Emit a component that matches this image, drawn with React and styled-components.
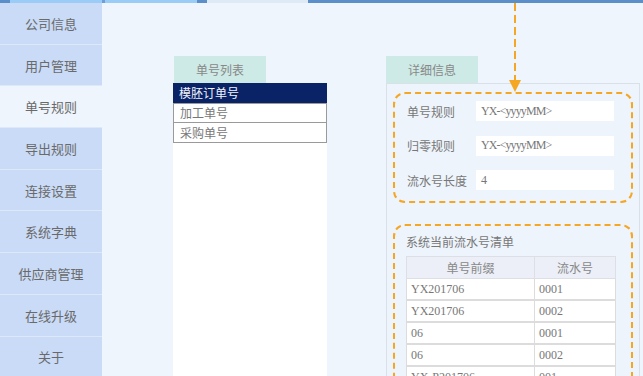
import React from "react";
import styled, { createGlobalStyle } from "styled-components";

const Global = createGlobalStyle`
  html, body { margin: 0; padding: 0; }
  body {
    font-family: "Liberation Serif", "Noto Sans CJK SC", serif;
    background: #eef5fc;
    overflow: hidden;
  }
`;

const Page = styled.div`
  position: relative;
  width: 643px;
  height: 376px;
  display: flex;
  flex-direction: column;
  overflow: hidden;
  background: #eef5fc;
`;

const TopBar = styled.div`
  display: flex;
  height: 3px;
  flex: none;
`;

const Seg = styled.div`
  width: ${(p) => (p.$w ? p.$w + "px" : "auto")};
  flex: ${(p) => (p.$w ? "none" : "1")};
  background: ${(p) => p.$c};
`;

const Body = styled.div`
  flex: 1;
  display: flex;
  min-height: 0;
`;

const Sidebar = styled.nav`
  width: 102px;
  flex: none;
  display: flex;
  flex-direction: column;
  background: #c9dbf7;
`;

const NavItem = styled.div`
  height: 41.7px;
  box-sizing: border-box;
  flex: none;
  display: flex;
  align-items: center;
  justify-content: center;
  border-bottom: 1px solid #dde8f9;
  background: ${(p) => (p.$active ? "#eef5fc" : "#c9dbf7")};
  color: #6a6a6a;
  font-family: "Noto Sans CJK SC", sans-serif;
  font-size: 13px;
`;

const Main = styled.main`
  flex: 1;
  display: flex;
  align-items: stretch;
  padding: 53px 0 0 71px;
  gap: 59px;
  min-height: 0;
`;

const Column = styled.section`
  width: ${(p) => p.$w}px;
  flex: none;
  display: flex;
  flex-direction: column;
  min-height: 0;
`;

const Tab = styled.div`
  width: 92px;
  height: 27px;
  margin-left: ${(p) => p.$ml || 0}px;
  display: flex;
  align-items: center;
  justify-content: center;
  background: #cdeae6;
  color: #888;
  font-family: "Noto Sans CJK SC", sans-serif;
  font-size: 12px;
  flex: none;
`;

const ListBox = styled.div`
  flex: 1;
  background: #fff;
  display: flex;
  flex-direction: column;
`;

const ListRow = styled.div`
  height: 19.5px;
  box-sizing: border-box;
  display: flex;
  align-items: center;
  padding-left: 6px;
  font-family: "Noto Sans CJK SC", sans-serif;
  font-size: 12px;
  background: ${(p) => (p.$selected ? "#0a2367" : "#fff")};
  color: ${(p) => (p.$selected ? "#f2f4fa" : "#777")};
  border: ${(p) => (p.$selected ? "none" : "1px solid #9a9a9a")};
  border-top: ${(p) => (p.$selected ? "none" : p.$first ? "1px solid #9a9a9a" : "none")};
  &:not(:first-child) { height: 20px; }
`;

const DetailBox = styled.div`
  flex: 1;
  border: 1px solid #d9e0e8;
  border-bottom: none;
  background: #eef4fb;
  padding: 8px 6px 0;
  display: flex;
  flex-direction: column;
  min-height: 0;
  overflow: hidden;
`;

const Dashed = styled.div`
  border: 2px dashed #f5a623;
  border-radius: ${(p) => (p.$open ? "12px 12px 0 0" : "12px")};
  ${(p) => (p.$open ? "border-bottom: none;" : "")}
  flex: none;
`;

const FormBox = styled(Dashed)`
  height: 111px;
  box-sizing: border-box;
  padding: 7px 0 0 12px;
  display: grid;
  grid-template-columns: 69px 138px;
  grid-auto-rows: 20px;
  row-gap: 14.5px;
  align-items: center;
`;

const Label = styled.div`
  font-family: "Noto Sans CJK SC", sans-serif;
  font-size: 12px;
  color: #777;
`;

const Input = styled.div`
  height: 20px;
  background: #fff;
  display: flex;
  align-items: center;
  padding-left: 5px;
  font-family: "Liberation Serif", serif;
  font-size: 12px;
  letter-spacing: -0.9px;
  color: #777;
`;

const ListSection = styled(Dashed)`
  margin-top: 21px;
  padding: 8px 0 0 11px;
  flex: 1;
`;

const SectionTitle = styled.div`
  font-family: "Noto Sans CJK SC", sans-serif;
  font-size: 12px;
  line-height: 16px;
  color: #777;
  margin-bottom: 6px;
`;

const Table = styled.table`
  width: 209px;
  border-collapse: collapse;
  background: #fff;
  table-layout: fixed;
`;

const Th = styled.th`
  height: 21px;
  padding: 0;
  border: 1px solid #dcdfe4;
  background: #eceff7;
  color: #888;
  font-family: "Noto Sans CJK SC", sans-serif;
  font-size: 12px;
  font-weight: normal;
  text-align: center;
`;

const Td = styled.td`
  height: 20px;
  padding: 0 0 0 4px;
  border: 1px solid #dcdcdc;
  border-width: 1px 1px 2px;
  color: #777;
  font-family: "Liberation Serif", serif;
  font-size: 12px;
`;

const Arrow = styled.svg`
  position: absolute;
  left: 508px;
  top: 3px;
  overflow: visible;
`;

const navItems = ["公司信息", "用户管理", "单号规则", "导出规则", "连接设置", "系统字典", "供应商管理", "在线升级", "关于"];

const rows = [
  ["YX201706", "0001"],
  ["YX201706", "0002"],
  ["06", "0001"],
  ["06", "0002"],
  ["YX-P201706", "001"],
  ["YX-P201706", "002"],
];

export default function App() {
  return (
    <>
      <Global />
      <Page>
        <TopBar>
          <Seg $w={10} $c="#5b8fc9" />
          <Seg $w={92} $c="#99cdf7" />
          <Seg $w={3} $c="#6f9fd6" />
          <Seg $w={92} $c="#99cdf7" />
          <Seg $w={10} $c="#5b8fc9" />
          <Seg $w={101} $c="#deeaf6" />
          <Seg $c="#5b8fc9" />
        </TopBar>
        <Body>
          <Sidebar>
            {navItems.map((n) => (
              <NavItem key={n} $active={n === "单号规则"}>
                {n}
              </NavItem>
            ))}
          </Sidebar>
          <Main>
            <Column $w={154}>
              <Tab $ml={1}>单号列表</Tab>
              <ListBox>
                <ListRow $selected>模胚订单号</ListRow>
                <ListRow $first>加工单号</ListRow>
                <ListRow>采购单号</ListRow>
              </ListBox>
            </Column>
            <Column $w={254}>
              <Tab>详细信息</Tab>
              <DetailBox>
                <FormBox>
                  <Label>单号规则</Label>
                  <Input>YX-&lt;yyyyMM&gt;</Input>
                  <Label>归零规则</Label>
                  <Input>YX-&lt;yyyyMM&gt;</Input>
                  <Label>流水号长度</Label>
                  <Input>4</Input>
                </FormBox>
                <ListSection $open>
                  <SectionTitle>系统当前流水号清单</SectionTitle>
                  <Table>
                    <colgroup>
                      <col style={{ width: "128px" }} />
                      <col style={{ width: "81px" }} />
                    </colgroup>
                    <thead>
                      <tr>
                        <Th>单号前缀</Th>
                        <Th>流水号</Th>
                      </tr>
                    </thead>
                    <tbody>
                      {rows.map((r, i) => (
                        <tr key={i}>
                          <Td>{r[0]}</Td>
                          <Td>{r[1]}</Td>
                        </tr>
                      ))}
                    </tbody>
                  </Table>
                </ListSection>
              </DetailBox>
            </Column>
          </Main>
        </Body>
        <Arrow width="14" height="90" viewBox="0 0 14 90">
          <line x1="7" y1="0" x2="7" y2="77" stroke="#f5a623" strokeWidth="2" strokeDasharray="8 4" />
          <polygon points="1,77 13,77 7,89" fill="#f5a623" />
        </Arrow>
      </Page>
    </>
  );
}
